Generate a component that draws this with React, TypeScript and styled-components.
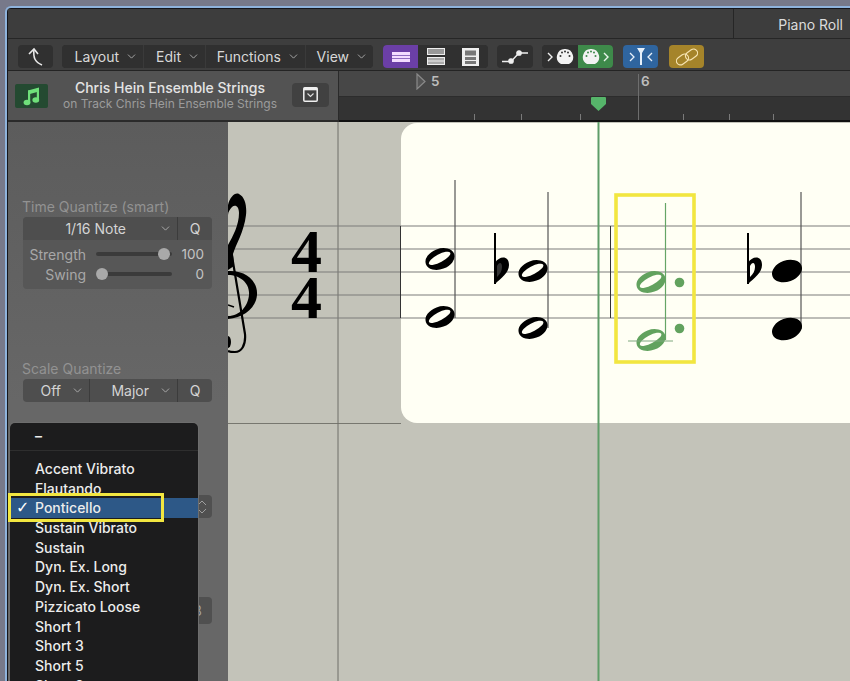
import styled, { createGlobalStyle } from "styled-components";
import { ChevronDown, ChevronsUpDown } from "lucide-react";

const GlobalStyle = createGlobalStyle`
   html, body {
      margin: 0;
      padding: 0;
      height: 100%;
      background: #77798a;
   }
   body {
      font-family: "Inter", "Liberation Sans", sans-serif;
      -webkit-font-smoothing: antialiased;
   }
`;

const MENU_ITEMS = [
   "Accent Vibrato",
   "Flautando",
   "Ponticello",
   "Sustain Vibrato",
   "Sustain",
   "Dyn. Ex. Long",
   "Dyn. Ex. Short",
   "Pizzicato Loose",
   "Short 1",
   "Short 3",
   "Short 5",
   "Short 8",
];

const RULER_TICKS = [473, 520, 579, 682, 728, 772];

const Chevron = () => <ChevronDown size={13} strokeWidth={1.6} color="#b5b5b5" />;

const HalfNote = ({ x, y, color = "#000" }: { x: number; y: number; color?: string }) => (
   <g transform={`translate(${x} ${y}) rotate(-20)`}>
      <ellipse rx={15} ry={10.2} fill={color} />
      <ellipse cy={-0.8} rx={12} ry={4} fill="#fffff4" transform="rotate(-8)" />
   </g>
);

const FilledNote = ({ x, y }: { x: number; y: number }) => (
   <ellipse cx={x} cy={y} rx={15.5} ry={10.6} fill="#000" transform={`rotate(-20 ${x} ${y})`} />
);

const Flat = ({ x, open }: { x: number; open?: boolean }) => (
   <g>
      <line x1={x} y1={233} x2={x} y2={284} stroke="#000" strokeWidth={2} />
      <path
         d={`M${x} 263 C${x + 4} 256 ${x + 14} 255 ${x + 14} 265 C${x + 14} 273 ${x + 6} 278 ${x} 284 Z`}
         fill="#000"
      />
      <path
         d={`M${x + 2} 266 C${x + 4} 262 ${x + 7} 262 ${x + 7} 267 C${x + 7} 271 ${x + 5} 274 ${x + 2} 277 Z`}
         fill={open ? "#fffff4" : "#333"}
      />
   </g>
);

const Midi = ({ cx, bg }: { cx: number; bg: string }) => (
   <g>
      <path d={`M${cx} 0 A8 8 0 0 1 ${cx + 4} 15 H${cx - 4} A8 8 0 0 1 ${cx} 0 Z`} fill="#f2f2f2" />
      {[[-4.5, 7], [-3, 3.5], [0, 2.5], [3, 3.5], [4.5, 7]].map(([dx, y]) => (
         <circle key={dx} cx={cx + dx} cy={y} r={1} fill={bg} />
      ))}
   </g>
);

const Score = () => (
   <ScoreSvg viewBox="228 122 622 559">
      <rect x={401} y={123} width={480} height={300} rx={16} fill="#fffff4" />
      <line x1={228} y1={423.5} x2={401} y2={423.5} stroke="#77776f" strokeWidth={1} />
      <line x1={338} y1={122} x2={338} y2={681} stroke="#6f6f69" strokeWidth={1} />

      {[226, 249, 272, 295, 318].map((y) => (
         <line key={y} x1={228} y1={y} x2={850} y2={y} stroke="#7d7d7a" strokeWidth={1.2} />
      ))}
      <line x1={400.5} y1={226} x2={400.5} y2={318} stroke="#333" strokeWidth={1} />
      <line x1={610.5} y1={226} x2={610.5} y2={318} stroke="#333" strokeWidth={1} />

      {/* clef, cut off by the inspector */}
      <path
         d="M228 205 C230 197 235 192 239 194 C245 197 247 206 246 215 C244 232 236 244 233 254 L234 266 L228 270 Z M228 245 C233 236 239 225 239 213 C239 206 235 204 232 207 C230 209 228 212 228 215 Z"
         fill="#000"
         fillRule="evenodd"
      />
      <path
         d="M228 271 C246 270 258 281 257 295 C256 308 244 318 228 319 L228 316 C240 316 248 306 249 295 C250 283 240 275 228 275 Z"
         fill="#000"
      />
      <path d="M228 305 L234 307" stroke="#000" strokeWidth={1.5} />
      <path
         d="M231 250 L245 334 C246 346 241 352 235 352 C232 352 230 352 228 351"
         fill="none"
         stroke="#000"
         strokeWidth={2.2}
      />
      <ellipse cx={228} cy={342} rx={3} ry={6} fill="#000" />
      <TimeSignature x={291} y={272}>4</TimeSignature>
      <TimeSignature x={291} y={318}>4</TimeSignature>

      <line x1={455} y1={180} x2={455} y2={318} stroke="#555" strokeWidth={1.2} />
      <HalfNote x={440} y={259} />
      <HalfNote x={440} y={317} />
      <Flat x={495} />
      <line x1={548} y1={192} x2={548} y2={328} stroke="#555" strokeWidth={1.2} />
      <HalfNote x={533} y={271} />
      <HalfNote x={533} y={328} />

      <line x1={665.5} y1={203} x2={665.5} y2={340} stroke="#65a566" strokeWidth={1.2} />
      <HalfNote x={651} y={282} color="#62a25e" />
      <HalfNote x={651} y={340} color="#62a25e" />
      <line x1={628} y1={341} x2={673} y2={341} stroke="#7fa87f" strokeWidth={1} />
      <circle cx={679.5} cy={282.5} r={4.8} fill="#62a25e" />
      <circle cx={679.5} cy={328.5} r={4.8} fill="#62a25e" />
      <rect x={616} y={195} width={78} height={167} fill="none" stroke="#f2e640" strokeWidth={3.6} />

      <Flat x={748} open />
      <line x1={801} y1={192} x2={801} y2={329} stroke="#555" strokeWidth={1.2} />
      <FilledNote x={787} y={271} />
      <FilledNote x={787} y={329} />

      <line x1={598.5} y1={122} x2={598.5} y2={681} stroke="#5f9d68" strokeWidth={2} />
   </ScoreSvg>
);

export default function App() {
   return (
      <Page>
         <GlobalStyle />
         <Window>
            <TitleBar>
               <TitleTab>Piano Roll</TitleTab>
            </TitleBar>

            <Toolbar>
               <ToolGroup $ml={10}>
                  <ToolButton $w={35}>
                     <svg width="18" height="20" viewBox="0 0 18 20" fill="none" stroke="#e8e8e8" strokeWidth="1.6">
                        <path d="M2 7 L7 2 L11 7" />
                        <path d="M7 2 C6 11 8 15 15 18" />
                     </svg>
                  </ToolButton>
               </ToolGroup>
               <ToolGroup $ml={9}>
                  <MenuButton $w={81}>Layout <Chevron /></MenuButton>
                  <MenuButton $w={62}>Edit <Chevron /></MenuButton>
                  <MenuButton $w={100}>Functions <Chevron /></MenuButton>
                  <MenuButton $w={68}>View <Chevron /></MenuButton>
               </ToolGroup>
               <ToolGroup $ml={10}>
                  <ToolButton $w={35} $bg="#6b3fa6">
                     <svg width="18" height="10" viewBox="0 0 18 10">
                        <rect width="18" height="10" fill="#f3dcff" />
                        <rect y="3" width="18" height="1" fill="#8f6cc0" />
                        <rect y="6" width="18" height="1" fill="#8f6cc0" />
                     </svg>
                  </ToolButton>
                  <ToolButton $w={35}>
                     <svg width="18" height="17" viewBox="0 0 18 17" fill="none" stroke="#eee" strokeWidth="1">
                        <rect x="0.5" y="0.5" width="17" height="6" fill="#999" />
                        <rect x="0.5" y="9.5" width="17" height="7" fill="#aaa" />
                        <line x1="0" y1="13" x2="18" y2="13" />
                     </svg>
                  </ToolButton>
                  <ToolButton $w={35}>
                     <svg width="17" height="18" viewBox="0 0 17 18">
                        <rect width="17" height="18" fill="#eee" />
                        <rect x="3" y="2.5" width="11" height="5" fill="#777" />
                        <rect x="3" y="9" width="11" height="3" fill="#777" />
                        <rect x="3" y="13" width="11" height="3" fill="#777" />
                     </svg>
                  </ToolButton>
               </ToolGroup>
               <ToolGroup $ml={9}>
                  <ToolButton $w={36}>
                     <svg width="26" height="14" viewBox="0 0 26 14" fill="none" stroke="#eee" strokeWidth="1.3">
                        <path d="M0 11.5 H9 L17 3 H26" />
                        <circle cx="9" cy="11" r="2.2" fill="#eee" />
                        <circle cx="17" cy="3" r="2.2" fill="#eee" />
                     </svg>
                  </ToolButton>
               </ToolGroup>
               <ToolGroup $ml={9}>
                  <ToolButton $w={36}>
                     <svg width="28" height="16" viewBox="0 0 28 16">
                        <path d="M2 4 L6 8 L2 12" fill="none" stroke="#eee" strokeWidth="1.4" />
                        <Midi cx={19} bg="#333" />
                     </svg>
                  </ToolButton>
                  <ToolButton $w={35} $bg="#3e8a4a">
                     <svg width="28" height="16" viewBox="0 0 28 16">
                        <Midi cx={9} bg="#3e8a4a" />
                        <path d="M22 4 L26 8 L22 12" fill="none" stroke="#eaf5ea" strokeWidth="1.4" />
                     </svg>
                  </ToolButton>
               </ToolGroup>
               <ToolGroup $ml={10}>
                  <ToolButton $w={35} $bg="#2f659f">
                     <svg width="24" height="17" viewBox="0 0 24 17">
                        <path d="M1 5 L5 9 L1 13" fill="none" stroke="#e6f0fa" strokeWidth="1.3" />
                        <path d="M8 0 H16 L13 5 V17 H11 V5 Z" fill="#e6f0fa" />
                        <path d="M23 5 L19 9 L23 13" fill="none" stroke="#e6f0fa" strokeWidth="1.3" />
                     </svg>
                  </ToolButton>
               </ToolGroup>
               <ToolGroup $ml={11}>
                  <ToolButton $w={35} $bg="#a5842a">
                     <svg width="22" height="18" viewBox="0 0 22 18" fill="none" stroke="#f5e3b0" strokeWidth="1.2">
                        <rect x="0" y="7.5" width="13" height="8" rx="4" transform="rotate(-35 6.5 11.5)" />
                        <rect x="9" y="2.5" width="13" height="8" rx="4" transform="rotate(-35 15.5 6.5)" />
                     </svg>
                  </ToolButton>
               </ToolGroup>
            </Toolbar>

            <HeaderRow>
               <RegionHeader>
                  <IconTile>
                     <svg width="17" height="19" viewBox="0 0 17 19" fill="#6fe07a">
                        <path d="M5 3.5 L16 0.5 V4.5 L5 7.5 Z" />
                        <rect x="5" y="3.5" width="2.2" height="12" />
                        <rect x="13.8" y="1" width="2.2" height="12" />
                        <ellipse cx="4" cy="15.5" rx="3.4" ry="2.8" />
                        <ellipse cx="12.8" cy="13" rx="3.4" ry="2.8" />
                     </svg>
                  </IconTile>
                  <RegionTitle>
                     <RegionName>Chris Hein Ensemble Strings</RegionName>
                     <RegionTrack>on Track Chris Hein Ensemble Strings</RegionTrack>
                  </RegionTitle>
                  <SmallButton>
                     <svg width="15" height="15" viewBox="0 0 15 15" fill="none">
                        <rect x="0.8" y="0.8" width="13.4" height="13.4" rx="1" stroke="#f0f0f0" strokeWidth="1.5" />
                        <rect x="0.8" y="0.8" width="13.4" height="2.5" fill="#f0f0f0" />
                        <path d="M4.5 6.5 L7.5 9.5 L10.5 6.5" stroke="#ddd" strokeWidth="1.1" />
                     </svg>
                  </SmallButton>
               </RegionHeader>
               <Ruler>
                  <RulerTop />
                  <RulerBottom />
                  <CycleMark viewBox="0 0 10 17">
                     <path d="M1 1 L9 8.5 L1 16 Z" fill="#555" stroke="#8a8a8a" strokeWidth="1.2" />
                  </CycleMark>
                  <BarNumber $x={92}>5</BarNumber>
                  <BarNumber $x={302}>6</BarNumber>
                  <BarLine $x={299} />
                  {RULER_TICKS.map((x) => (
                     <RulerTick key={x} $x={x - 338} />
                  ))}
                  <PlayheadCap viewBox="0 0 15 14">
                     <path d="M1 0 H14 Q15 0 15 1 V7 L7.5 14 L0 7 V1 Q0 0 1 0 Z" fill="#56b56a" />
                  </PlayheadCap>
               </Ruler>
            </HeaderRow>

            <Body>
               <Inspector>
                  <SectionLabel $mt={77}>Time Quantize (smart)</SectionLabel>
                  <ControlBox>
                     <SelectRow>
                        <SelectCell $w={155} $gap={33}>1/16 Note <Chevron /></SelectCell>
                        <QButton>Q</QButton>
                     </SelectRow>
                     <SliderRows>
                        <SliderRow>
                           <SliderLabel>Strength</SliderLabel>
                           <SliderTrack>
                              <SliderThumb $left={62} />
                           </SliderTrack>
                           <SliderValue>100</SliderValue>
                        </SliderRow>
                        <SliderRow>
                           <SliderLabel>Swing</SliderLabel>
                           <SliderTrack>
                              <SliderThumb $left={0} />
                           </SliderTrack>
                           <SliderValue>0</SliderValue>
                        </SliderRow>
                     </SliderRows>
                  </ControlBox>

                  <SectionLabel $mt={72}>Scale Quantize</SectionLabel>
                  <ControlBox>
                     <SelectRow>
                        <SelectCell $w={67} $gap={10}>Off <Chevron /></SelectCell>
                        <SelectCell $w={88} $gap={10}>Major <Chevron /></SelectCell>
                        <QButton>Q</QButton>
                     </SelectRow>
                  </ControlBox>

                  <HiddenSelect $mt={93} $h={23}>
                     <ChevronsUpDown size={18} strokeWidth={1.2} color="#a8a8a8" />
                  </HiddenSelect>
                  <HiddenSelect $mt={79} $h={27}>
                     <HiddenValue>8</HiddenValue>
                  </HiddenSelect>
               </Inspector>
               <Canvas>
                  <Score />
               </Canvas>
            </Body>
         </Window>

         <PopupMenu>
            <MenuDash>–</MenuDash>
            <MenuSeparator />
            {MENU_ITEMS.map((item) => (
               <MenuItem key={item} $selected={item === "Ponticello"}>
                  {item === "Ponticello" && <CheckMark>✓</CheckMark>}
                  {item}
               </MenuItem>
            ))}
         </PopupMenu>
         <Callout />
      </Page>
   );
}

const Page = styled.div`
   position: relative;
   width: 850px;
   height: 681px;
   overflow: hidden;
   padding: 6px 0 0 5px;
   box-sizing: border-box;
   background: #77798a;
`;

const Window = styled.div`
   height: 675px;
   box-sizing: border-box;
   display: flex;
   flex-direction: column;
   border-top: 2px solid #8fb3dc;
   border-left: 2px solid #8fb3dc;
   border-top-left-radius: 6px;
   background: #3b3b3b;
   box-shadow: inset 1px 1px 0 #15151a;
   padding: 1px 0 0 1px;
`;

const TitleBar = styled.div`
   height: 30px;
   box-sizing: border-box;
   display: flex;
   justify-content: flex-end;
   background: #3d3d3d;
   border-bottom: 1px solid #262626;
`;

const TitleTab = styled.div`
   width: 117px;
   box-sizing: border-box;
   border-left: 1px solid #262626;
   padding: 7px 7px 0 0;
   text-align: right;
   font-size: 14px;
   color: #dcdcdc;
`;

const Toolbar = styled.div`
   height: 32px;
   display: flex;
   align-items: center;
   background: #3e3e3e;
   border-bottom: 1px solid #242424;
   box-sizing: border-box;
   padding-top: 4px;
`;

const ToolGroup = styled.div<{ $ml: number }>`
   display: flex;
   height: 23px;
   margin-left: ${(p) => p.$ml}px;
   border-radius: 4px;
   overflow: hidden;
   background: #303030;
`;

const ToolButton = styled.div<{ $w: number; $bg?: string }>`
   width: ${(p) => p.$w}px;
   box-sizing: border-box;
   display: flex;
   align-items: center;
   justify-content: center;
   background: ${(p) => p.$bg ?? "#303030"};
`;

const MenuButton = styled(ToolButton)`
   justify-content: flex-end;
   gap: 6px;
   padding-right: 5px;
   font-size: 14px;
   color: #d8d8d8;
   & + & {
      border-left: 1px solid #3a3a3a;
   }
`;

const HeaderRow = styled.div`
   height: 51px;
   display: flex;
`;

const RegionHeader = styled.div`
   width: 330px;
   box-sizing: border-box;
   display: flex;
   align-items: center;
   background: #535353;
   border-bottom: 2px solid #2a2a2a;
   padding: 1px 0 0 7px;
`;

const IconTile = styled.div`
   width: 33px;
   height: 24px;
   display: flex;
   align-items: center;
   justify-content: center;
   background: #244a31;
   border-radius: 2px;
`;

const RegionTitle = styled.div`
   width: 244px;
   text-align: center;
   line-height: 16px;
`;

const RegionName = styled.div`
   font-size: 14px;
   font-weight: 500;
   color: #e4e4e4;
   white-space: nowrap;
`;

const RegionTrack = styled.div`
   font-size: 12px;
   color: #9c9c9c;
   white-space: nowrap;
`;

const SmallButton = styled.div`
   width: 37px;
   height: 24px;
   margin-bottom: 3px;
   display: flex;
   align-items: center;
   justify-content: center;
   background: #414141;
   border-radius: 4px;
`;

const Ruler = styled.div`
   position: relative;
   flex: 1;
   display: flex;
   flex-direction: column;
   border-left: 1px solid #2a2a2a;
`;

const RulerTop = styled.div`
   height: 26px;
   box-sizing: border-box;
   background: #474747;
   border-bottom: 1px solid #2c2c2c;
`;

const RulerBottom = styled.div`
   flex: 1;
   background: #333333;
   border-bottom: 2px solid #111;
`;

const CycleMark = styled.svg`
   position: absolute;
   left: 77px;
   top: 2px;
   width: 10px;
   height: 17px;
`;

const BarNumber = styled.span<{ $x: number }>`
   position: absolute;
   left: ${(p) => p.$x}px;
   top: 1px;
   font-size: 13.5px;
   font-weight: 600;
   line-height: 18px;
   color: #bdbdbd;
`;

const BarLine = styled.div<{ $x: number }>`
   position: absolute;
   left: ${(p) => p.$x}px;
   top: 3px;
   bottom: 2px;
   width: 1px;
   background: #6e6e6e;
`;

const RulerTick = styled.div<{ $x: number }>`
   position: absolute;
   left: ${(p) => p.$x}px;
   bottom: 2px;
   width: 1px;
   height: 6px;
   background: #7a7a7a;
`;

const PlayheadCap = styled.svg`
   position: absolute;
   left: 252px;
   top: 26px;
   width: 15px;
   height: 14px;
`;

const Body = styled.div`
   flex: 1;
   display: flex;
   min-height: 0;
`;

const Inspector = styled.div`
   width: 220px;
   box-sizing: border-box;
   padding: 0 16px 0 15px;
   background: linear-gradient(#5c5c5c, #676767 50%);
`;

const SectionLabel = styled.div<{ $mt: number }>`
   margin-top: ${(p) => p.$mt}px;
   margin-bottom: 2px;
   margin-left: -1px;
   height: 16px;
   line-height: 16px;
   font-size: 14px;
   color: #929292;
   white-space: nowrap;
`;

const ControlBox = styled.div`
   border-radius: 4px;
   overflow: hidden;
   background: #575757;
`;

const SelectRow = styled.div`
   height: 23px;
   display: flex;
   background: #4e4e4e;
`;

const SelectCell = styled.div<{ $w: number; $gap: number }>`
   width: ${(p) => p.$w}px;
   box-sizing: border-box;
   display: flex;
   align-items: center;
   justify-content: flex-end;
   gap: ${(p) => p.$gap}px;
   padding-right: 5px;
   font-size: 14px;
   color: #d4d4d4;
   border-right: 1px solid #3c3c3c;
`;

const QButton = styled.div`
   flex: 1;
   display: flex;
   align-items: center;
   justify-content: center;
   font-size: 14px;
   color: #d4d4d4;
`;

const SliderRows = styled.div`
   display: flex;
   flex-direction: column;
   padding: 4px 0 5px 6px;
`;

const SliderRow = styled.div`
   height: 20px;
   display: grid;
   grid-template-columns: 57px 86px 32px;
   align-items: center;
`;

const SliderLabel = styled.div`
   text-align: right;
   font-size: 14px;
   color: #a8a8a8;
`;

const SliderTrack = styled.div`
   position: relative;
   margin-left: 10px;
   height: 4px;
   border-radius: 2px;
   background: #3b3b3b;
`;

const SliderThumb = styled.div<{ $left: number }>`
   position: absolute;
   left: ${(p) => p.$left}px;
   top: -4px;
   width: 12px;
   height: 12px;
   border-radius: 50%;
   background: #a9a9a9;
`;

const SliderValue = styled.div`
   text-align: right;
   font-size: 13.5px;
   color: #c4c4c4;
`;

const HiddenSelect = styled.div<{ $mt: number; $h: number }>`
   margin-top: ${(p) => p.$mt}px;
   height: ${(p) => p.$h}px;
   display: flex;
   align-items: center;
   justify-content: flex-end;
   padding-right: 1px;
   border-radius: 4px;
   background: #505050;
`;

const HiddenValue = styled.span`
   font-size: 14px;
   color: #a0a0a0;
   margin-right: 9px;
`;

const Canvas = styled.div`
   flex: 1;
   background: #c3c3b9;
   min-width: 0;
   overflow: hidden;
`;

const ScoreSvg = styled.svg`
   display: block;
   width: 622px;
   height: 559px;
`;

const TimeSignature = styled.text`
   font-family: "Liberation Serif", serif;
   font-weight: 700;
   font-size: 62px;
   fill: #000;
`;

const PopupMenu = styled.div`
   position: absolute;
   left: 10px;
   top: 423px;
   width: 188px;
   height: 270px;
   box-sizing: border-box;
   background: #1c1c1d;
   border-radius: 5px;
   box-shadow: 0 0 0 1px #6d6d6d;
   font-size: 14px;
   font-weight: 500;
   color: #ececec;
`;

const MenuDash = styled.div`
   height: 27px;
   line-height: 26px;
   padding-left: 25px;
   font-weight: 600;
`;

const MenuSeparator = styled.div`
   height: 1px;
   margin-bottom: 8px;
   background: #2e2e2e;
`;

const MenuItem = styled.div<{ $selected?: boolean }>`
   position: relative;
   height: 19.7px;
   line-height: 19.7px;
   padding-left: 25px;
   white-space: nowrap;
   background: ${(p) => (p.$selected ? "#2d5887" : "transparent")};
`;

const CheckMark = styled.span`
   position: absolute;
   left: 6px;
   top: 0;
   font-family: "DejaVu Sans", sans-serif;
   font-size: 16px;
   font-weight: 700;
   color: #fff;
`;

const Callout = styled.div`
   position: absolute;
   left: 8px;
   top: 493px;
   width: 156px;
   height: 29px;
   box-sizing: border-box;
   border: 3.5px solid #f2e640;
`;
